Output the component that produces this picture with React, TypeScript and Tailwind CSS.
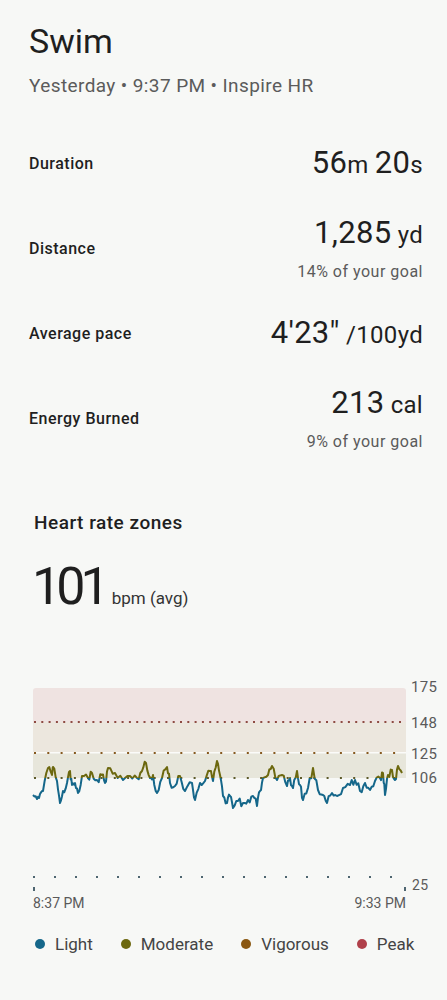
import React from "react";

const anchors: [number, number][] = [
  [33, 797], [37, 801], [40, 796], [43, 793], [48, 770], [52, 777], [53, 769], [57, 783],
  [60, 805], [63, 793], [67, 785], [70, 773], [72, 787], [75, 785], [78, 795], [82, 778],
  [88, 780], [92, 775], [97, 782], [102, 777], [105, 785], [108, 770], [115, 775], [123, 782],
  [130, 778], [137, 780], [142, 773], [146, 765], [150, 780], [153, 777], [157, 795], [162, 780],
  [167, 769], [170, 785], [175, 788], [180, 778], [185, 793], [192, 785], [195, 802], [200, 785],
  [205, 783], [210, 773], [213, 783], [217, 763], [220, 777], [223, 798], [227, 805], [230, 798],
  [233, 810], [238, 803], [243, 805], [248, 802], [253, 798], [257, 808], [260, 793], [263, 780],
  [268, 777], [272, 768], [277, 782], [282, 777], [287, 788], [290, 780], [293, 790], [297, 773],
  [300, 787], [303, 802], [308, 790], [313, 770], [318, 792], [323, 797], [327, 805], [332, 795],
  [337, 798], [343, 790], [350, 787], [355, 782], [360, 793], [365, 785], [370, 792], [375, 783],
  [380, 780], [383, 775], [385, 797], [388, 777], [392, 772], [395, 782], [398, 768], [402, 775],
];

function noise(i: number) {
  const s = Math.sin(i * 12.9898 + 3.1) * 43758.5453;
  return (s - Math.floor(s)) * 8 - 4;
}

function buildPath() {
  const pts: [number, number][] = [];
  for (let i = 0; i < anchors.length; i++) {
    const [x1, y1] = anchors[i];
    pts.push([x1, y1]);
    if (i < anchors.length - 1) {
      const [x2, y2] = anchors[i + 1];
      pts.push([(x1 * 2 + x2) / 3, (y1 * 2 + y2) / 3 + noise(i)]);
      pts.push([(x1 + x2 * 2) / 3, (y1 + y2 * 2) / 3 + noise(i + 100)]);
    }
  }
  return pts
    .map(([x, y], i) => `${i === 0 ? "M" : "L"}${x.toFixed(1)} ${(y - 680).toFixed(1)}`)
    .join(" ");
}

const OFF = 680;

function Chart() {
  const d = buildPath();
  const dots: number[] = [];
  for (let x = 34; x <= 395; x += 21) dots.push(x);
  return (
    <svg width={447} height={216} viewBox="0 0 447 216" className="block">
      <defs>
        <clipPath id="above">
          <rect x={0} y={0} width={447} height={780 - OFF} />
        </clipPath>
        <clipPath id="below">
          <rect x={0} y={780 - OFF} width={447} height={120} />
        </clipPath>
      </defs>
      <path d={`M33 ${690 - OFF + 3} Q33 ${690 - OFF} 36 ${690 - OFF} L403 ${690 - OFF} Q406 ${690 - OFF} 406 ${690 - OFF + 3} L406 ${724 - OFF} L33 ${724 - OFF} Z`} fill="#efe3e1" />
      <rect x={33} y={724 - OFF} width={373} height={30} fill="#ece7de" />
      <rect x={33} y={754 - OFF} width={373} height={1.5} fill="#fbfbf9" />
      <rect x={33} y={755.5 - OFF} width={373} height={24.5} fill="#e7e6db" />
      <line x1={34} x2={406} y1={724 - OFF} y2={724 - OFF} stroke="#8e4b43" strokeWidth={2} strokeDasharray="2 5.3" />
      <line x1={34} x2={406} y1={755 - OFF} y2={755 - OFF} stroke="#86591f" strokeWidth={2} strokeDasharray="2 11.3" />
      <line x1={34} x2={406} y1={780 - OFF} y2={780 - OFF} stroke="#5d5a2a" strokeWidth={2} strokeDasharray="2 11.3" />
      <path d={d} fill="none" stroke="#6c680f" strokeWidth={2} strokeLinejoin="round" clipPath="url(#above)" />
      <path d={d} fill="none" stroke="#15678a" strokeWidth={2} strokeLinejoin="round" clipPath="url(#below)" />
      {dots.map((x) => (
        <rect key={x} x={x - 1} y={879 - OFF - 1} width={2} height={2} fill="#4e6570" />
      ))}
      <rect x={33} y={889 - OFF} width={2} height={4} fill="#4e6570" />
      <rect x={404} y={889 - OFF} width={2} height={4} fill="#4e6570" />
      <g fill="#5a5a5a" fontFamily="Roboto, sans-serif" fontSize={15} letterSpacing={0.3}>
        <text x={411} y={689 - OFF} dominantBaseline="central">175</text>
        <text x={411} y={725 - OFF} dominantBaseline="central">148</text>
        <text x={411} y={756 - OFF} dominantBaseline="central">125</text>
        <text x={411} y={780 - OFF} dominantBaseline="central">106</text>
        <text x={412} y={887 - OFF} dominantBaseline="central" fontSize={14}>25</text>
      </g>
    </svg>
  );
}

function Row({
  label,
  children,
}: {
  label: string;
  children: React.ReactNode;
}) {
  return (
    <div className="flex h-[85px] items-center justify-between">
      <div className="text-[16px] leading-[22px] font-medium tracking-[0.5px] text-[#1f1f1f]">{label}</div>
      <div className="flex flex-col items-end">{children}</div>
    </div>
  );
}

function Value({ parts }: { parts: [string, boolean][] }) {
  return (
    <div className="flex items-baseline leading-[36px] tracking-[0.3px] text-[#1f1f1f]">
      {parts.map(([t, big], i) => (
        <span key={i} className={big ? "text-[31px]" : "text-[24px]"}>
          {t}
        </span>
      ))}
    </div>
  );
}

function Sub({ children }: { children: React.ReactNode }) {
  return (
    <div className="mt-[8px] text-[16px] leading-[22px] tracking-[0.5px] text-[#5b5b5b]">{children}</div>
  );
}

export default function App() {
  const legend: [string, string][] = [
    ["Light", "#15678a"],
    ["Moderate", "#6c680f"],
    ["Vigorous", "#8a5711"],
    ["Peak", "#b0404a"],
  ];
  return (
    <div className="min-h-[1000px] w-[447px] bg-[#f7f8f6] font-['Roboto',sans-serif] text-[#1f1f1f]">
      <div className="pl-[29px] pr-[24px] pt-[21px]">
        <div className="text-[34px] leading-[40px]">Swim</div>
        <div className="mt-[13px] text-[19px] leading-[24px] tracking-[0.4px] text-[#5b5b5b]">
          Yesterday • 9:37 PM • Inspire HR
        </div>
        <div className="mt-[23px]">
          <Row label="Duration">
            <Value parts={[["56", true], ["m", false], ["\u00a0", false], ["20", true], ["s", false]]} />
          </Row>
          <Row label="Distance">
            <Value parts={[["1,285", true], ["\u00a0yd", false]]} />
            <Sub>14% of your goal</Sub>
          </Row>
          <Row label="Average pace">
            <Value parts={[["4'23\"", true], ["\u00a0/100yd", false]]} />
          </Row>
          <Row label="Energy Burned">
            <Value parts={[["213", true], ["\u00a0cal", false]]} />
            <Sub>9% of your goal</Sub>
          </Row>
        </div>
      </div>
      <div className="mt-[50px] px-[34px] text-[19px] leading-[24px] font-medium tracking-[0.5px]">
        Heart rate zones
      </div>
      <div className="mt-[24px] flex items-baseline px-[34px]">
        <span className="-ml-[2px] text-[52px] leading-[56px] tracking-[-5px]">101</span>
        <span className="ml-[7px] text-[17px] text-[#333]">bpm (avg)</span>
      </div>
      <div className="mt-[63px]">
        <Chart />
      </div>
      <div className="flex justify-between pl-[33px] pr-[41px] text-[14px] leading-[18px] text-[#5a5a5a]">
        <span>8:37 PM</span>
        <span>9:33 PM</span>
      </div>
      <div className="mt-[20px] flex items-center gap-[28px] pl-[35px] text-[17px] leading-[24px] text-[#444]">
        {legend.map(([name, color]) => (
          <div key={name} className="flex items-center gap-[10px]">
            <span className="h-[10px] w-[10px] rounded-full" style={{ backgroundColor: color }} />
            <span>{name}</span>
          </div>
        ))}
      </div>
    </div>
  );
}
